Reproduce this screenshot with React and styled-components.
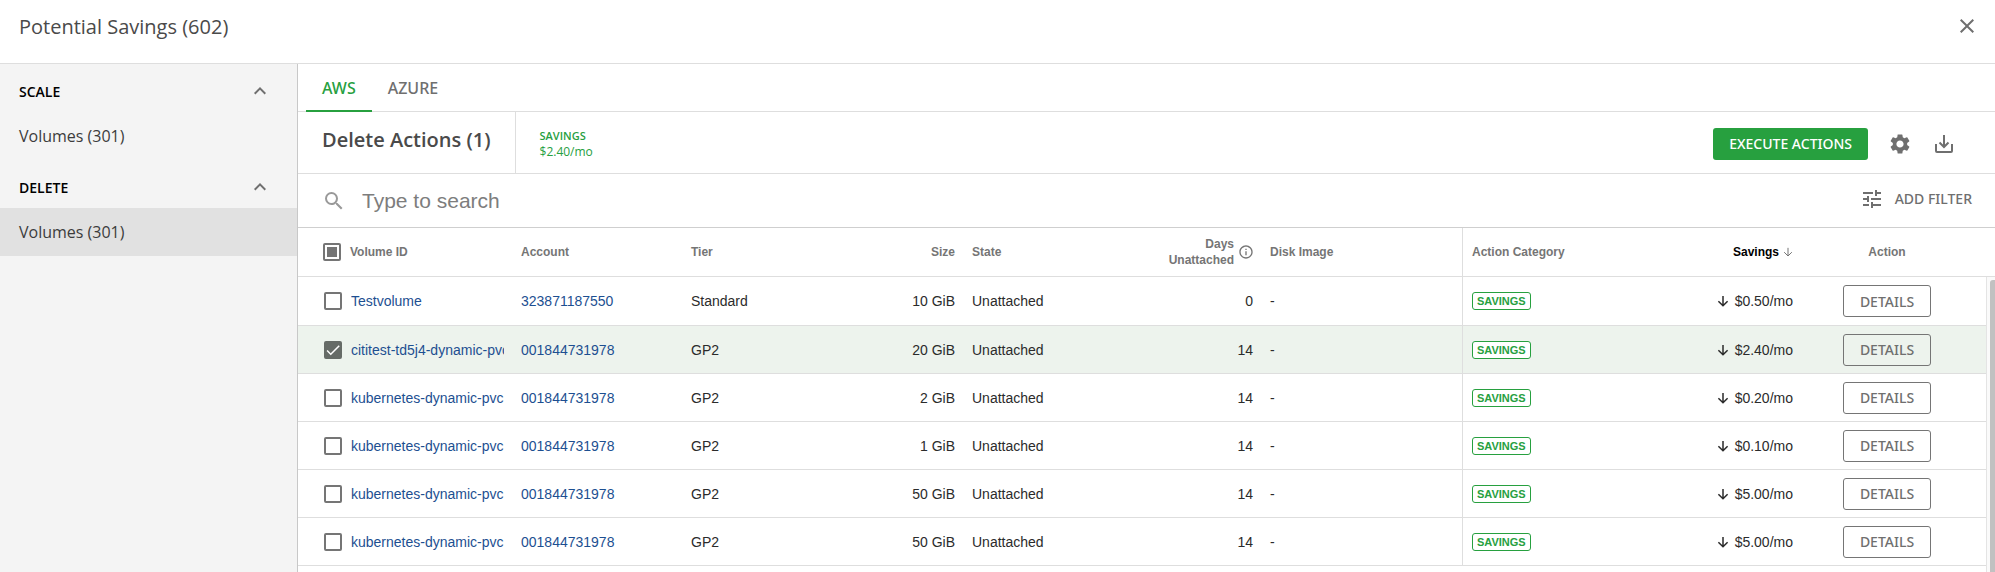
import React from "react";
import styled, { createGlobalStyle, css } from "styled-components";
import {
  MdCheck,
  MdClose,
  MdExpandLess,
  MdInfoOutline,
  MdSearch,
  MdSettings,
  MdTune,
} from "react-icons/md";

const green = "#27a03f";
const grey = "#6f6f6f";
const line = "#dedede";
const sans = `"Open Sans", "Noto Sans", sans-serif`;
const label = `"Noto Sans", "Open Sans", sans-serif`;
const grid = `"Liberation Sans", Arial, sans-serif`;

const GlobalStyle = createGlobalStyle`
  *, *::before, *::after { box-sizing: border-box; }
  html, body, #root { height: 100%; }
  body { margin: 0; background: #fff; color: #333; font-family: ${sans}; overflow: hidden; }
  button, input { font: inherit; }
  button { cursor: pointer; }
`;

const Page = styled.div`
  display: flex;
  flex-direction: column;
  height: 100vh;
`;

const TitleBar = styled.header`
  display: flex;
  flex: none;
  justify-content: space-between;
  align-items: flex-start;
  height: 64px;
  padding: 12px 16px 0 19px;
  border-bottom: 1px solid ${line};
`;

const PageTitle = styled.h1`
  margin: 0;
  font-size: 20px;
  font-weight: 400;
  line-height: 30px;
  color: #4a4a4a;
`;

const IconButton = styled.button`
  display: inline-flex;
  padding: 2px 0;
  border: 0;
  background: none;
  color: ${grey};
  font-size: 24px;
`;

const Body = styled.div`
  display: flex;
  flex: 1;
  min-height: 0;
`;

const Sidebar = styled.nav`
  flex: none;
  width: 298px;
  border-right: 1px solid #c8c8c8;
  background: #f4f4f4;
`;

const SectionToggle = styled.button`
  display: flex;
  align-items: center;
  justify-content: space-between;
  width: 100%;
  height: 48px;
  padding: 6px 25px 0 19px;
  border: 0;
  background: none;
  color: #000;
  font-size: 14px;
  font-weight: 600;
  svg { font-size: 24px; color: ${grey}; }
`;

const SectionLink = styled.a`
  display: flex;
  align-items: center;
  height: 48px;
  padding: 0 19px;
  background: ${(p) => (p.$active ? "#e1e1e1" : "transparent")};
  color: #3c3c3c;
  font-size: 16px;
  text-decoration: none;
`;

const Main = styled.main`
  display: flex;
  flex: 1;
  flex-direction: column;
  min-width: 0;
`;

const Tabs = styled.div`
  display: flex;
  flex: none;
  height: 48px;
  padding-left: 8px;
  border-bottom: 1px solid ${line};
`;

const Tab = styled.button`
  height: 48px;
  padding: 2px 16px 0;
  border: 0;
  border-bottom: 2px solid ${(p) => (p.$active ? green : "transparent")};
  background: none;
  color: ${(p) => (p.$active ? green : grey)};
  font-family: ${label};
  font-size: 16px;
  font-weight: 500;
`;

const ActionBar = styled.section`
  display: flex;
  flex: none;
  height: 62px;
  border-bottom: 1px solid ${line};
`;

const ActionTitle = styled.h2`
  margin: 0;
  padding: 12px 24px 0;
  border-right: 1px solid ${line};
  color: #4a4a4a;
  font-size: 20px;
  font-weight: 600;
  line-height: 32px;
`;

const Metric = styled.div`
  flex: 1;
  padding: 16px 24px;
  color: ${green};
  font-size: 12px;
  line-height: 16px;
`;

const MetricLabel = styled.div`
  font-size: 11px;
  font-weight: 600;
`;

const ActionTools = styled.div`
  display: flex;
  align-items: center;
  gap: 20px;
  padding: 2px 39px 0 0;
`;

const PrimaryButton = styled.button`
  height: 32px;
  padding: 0 16px;
  border: 0;
  border-radius: 3px;
  background: ${green};
  color: #fff;
  font-family: ${label};
  font-size: 14px;
  font-weight: 500;
`;

const SearchBar = styled.section`
  display: flex;
  flex: none;
  align-items: center;
  height: 54px;
  padding: 0 23px 0 24px;
  border-bottom: 1px solid #cfcfcf;
  color: #999;
  > svg { flex: none; font-size: 24px; }
`;

const SearchInput = styled.input`
  flex: 1;
  min-width: 0;
  height: 40px;
  margin-left: 16px;
  padding: 0;
  border: 0;
  outline: 0;
  font-family: ${grid};
  font-size: 21px;
  &::placeholder { color: #7d7d7d; opacity: 1; }
`;

const FilterButton = styled.button`
  display: flex;
  align-items: center;
  gap: 11px;
  padding: 0 0 4px;
  border: 0;
  background: none;
  color: ${grey};
  font-family: ${label};
  font-size: 14px;
  font-weight: 500;
  svg { font-size: 24px; }
`;

const TableFrame = styled.div`
  position: relative;
  flex: 1;
  min-height: 0;
  overflow: hidden;
`;

const Table = styled.table`
  width: 100%;
  table-layout: fixed;
  border-collapse: separate;
  border-spacing: 0;
  font-family: ${grid};
`;

const Col = styled.col`
  width: ${(p) => (p.$w ? `${p.$w}px` : "auto")};
`;

const cell = css`
  padding: 0 8px 0 9px;
  border-bottom: 1px solid ${line};
  border-right: ${(p) => (p.$divider ? `1px solid ${line}` : "0")};
  text-align: ${(p) => p.$align || "left"};
  white-space: nowrap;
  overflow: hidden;
`;

const HeadCell = styled.th`
  ${cell}
  height: 49px;
  color: ${(p) => (p.$sorted ? "#000" : "#757575")};
  font-size: 12px;
  line-height: 16px;
`;

const Row = styled.tr`
  height: 48px;
  background: ${(p) => (p.$selected ? "#edf3ed" : "#fff")};
  &:first-child { height: 49px; }
`;

const Cell = styled.td`
  ${cell}
  color: #2b2b2b;
  font-size: 14px;
`;

const VolumeCell = styled.div`
  display: flex;
  align-items: center;
  gap: 9px;
  padding-left: ${(p) => (p.$head ? "16px" : "17px")};
`;

const Clip = styled.div`
  flex: 1;
  min-width: 0;
  overflow: hidden;
`;

const CellLink = styled.a`
  color: #1d4f91;
  text-decoration: none;
`;

const CheckFrame = styled.span`
  position: relative;
  display: inline-flex;
  flex: none;
  svg {
    position: absolute;
    inset: 0;
    width: 18px;
    height: 18px;
    color: #fff;
    stroke: currentColor;
    pointer-events: none;
  }
`;

const CheckInput = styled.input`
  display: grid;
  place-items: center;
  width: 18px;
  height: 18px;
  margin: 0;
  appearance: none;
  border: 2px solid #757575;
  border-radius: 2px;
  background: #fff;
  &:checked { border-color: #666b67; background: #666b67; }
  &:indeterminate::before {
    content: "";
    width: 10px;
    height: 10px;
    background: #757575;
  }
`;

const HeadGroup = styled.div`
  display: flex;
  align-items: center;
  justify-content: flex-end;
  gap: 4px;
  svg { flex: none; }
`;

const InfoIcon = styled(MdInfoOutline)`
  font-size: 16px;
  margin-right: -1px;
`;

const Badge = styled.span`
  display: inline-block;
  padding: 0 4px;
  border: 1px solid ${green};
  border-radius: 3px;
  background: #fff;
  color: ${green};
  font-size: 11px;
  font-weight: 700;
  line-height: 16px;
`;

const Amount = styled.div`
  display: flex;
  align-items: center;
  justify-content: flex-end;
  gap: 6px;
`;

const DetailsButton = styled.button`
  width: 88px;
  height: 32px;
  padding: 0;
  border: 1px solid #757575;
  border-radius: 3px;
  background: transparent;
  color: ${grey};
  font-family: ${label};
  font-size: 14px;
  font-weight: 500;
`;

const ScrollTrack = styled.div`
  position: absolute;
  top: 49px;
  right: 0;
  bottom: 0;
  width: 9px;
  padding-top: 3px;
  padding-left: 3px;
  border-left: 1px solid #e4e4e4;
  background: #fafafa;
`;

const ScrollThumb = styled.div`
  height: 100%;
  border-radius: 3px 0 0 0;
  background: #c1c1c1;
`;

function DownArrow({ size, stroke, color }) {
  return (
    <svg width={size} height={size} viewBox="0 0 12 12" fill="none" stroke={color} strokeWidth={stroke}>
      <path d="M6 1v9.6M1.4 6.2L6 10.8l4.6-4.6" />
    </svg>
  );
}

function DownloadIcon() {
  return (
    <svg width="24" height="24" viewBox="0 0 24 24" fill="none" stroke="currentColor" strokeWidth="2">
      <path d="M12 3v12M7.5 10.5L12 15l4.5-4.5M4 12v7a1 1 0 0 0 1 1h14a1 1 0 0 0 1-1v-7" />
    </svg>
  );
}

function Check({ label: name, checked, indeterminate }) {
  const ref = React.useRef(null);
  const [on, setOn] = React.useState(Boolean(checked));
  React.useEffect(() => {
    ref.current.indeterminate = Boolean(indeterminate);
  }, [indeterminate]);
  return (
    <CheckFrame>
      <CheckInput
        ref={ref}
        type="checkbox"
        aria-label={name}
        checked={on}
        onChange={(e) => setOn(e.target.checked)}
      />
      {on && <MdCheck />}
    </CheckFrame>
  );
}

const sections = [
  { name: "SCALE", item: "Volumes (301)" },
  { name: "DELETE", item: "Volumes (301)", active: true },
];

const rows = [
  { id: "Testvolume", account: "323871187550", tier: "Standard", size: "10 GiB", days: 0, savings: "$0.50/mo" },
  { id: "cititest-td5j4-dynamic-pvc", account: "001844731978", tier: "GP2", size: "20 GiB", days: 14, savings: "$2.40/mo", selected: true },
  { id: "kubernetes-dynamic-pvc", account: "001844731978", tier: "GP2", size: "2 GiB", days: 14, savings: "$0.20/mo" },
  { id: "kubernetes-dynamic-pvc", account: "001844731978", tier: "GP2", size: "1 GiB", days: 14, savings: "$0.10/mo" },
  { id: "kubernetes-dynamic-pvc", account: "001844731978", tier: "GP2", size: "50 GiB", days: 14, savings: "$5.00/mo" },
  { id: "kubernetes-dynamic-pvc", account: "001844731978", tier: "GP2", size: "50 GiB", days: 14, savings: "$5.00/mo" },
];

const columnWidths = [214, 170, 140, 141, 149, 149, null, 169, 169, 171, 23];

export default function App() {
  return (
    <Page>
      <GlobalStyle />
      <TitleBar>
        <PageTitle>Potential Savings (602)</PageTitle>
        <IconButton aria-label="Close"><MdClose /></IconButton>
      </TitleBar>
      <Body>
        <Sidebar>
          {sections.map((s) => (
            <div key={s.name}>
              <SectionToggle aria-expanded="true">
                {s.name}
                <MdExpandLess />
              </SectionToggle>
              <SectionLink href="#" $active={s.active}>{s.item}</SectionLink>
            </div>
          ))}
        </Sidebar>
        <Main>
          <Tabs role="tablist">
            <Tab role="tab" aria-selected="true" $active>AWS</Tab>
            <Tab role="tab" aria-selected="false">AZURE</Tab>
          </Tabs>
          <ActionBar>
            <ActionTitle>Delete Actions (1)</ActionTitle>
            <Metric>
              <MetricLabel>SAVINGS</MetricLabel>
              $2.40/mo
            </Metric>
            <ActionTools>
              <PrimaryButton>EXECUTE ACTIONS</PrimaryButton>
              <IconButton aria-label="Settings"><MdSettings /></IconButton>
              <IconButton aria-label="Download"><DownloadIcon /></IconButton>
            </ActionTools>
          </ActionBar>
          <SearchBar>
            <MdSearch />
            <SearchInput type="text" aria-label="Search" placeholder="Type to search" />
            <FilterButton>
              <MdTune />
              ADD FILTER
            </FilterButton>
          </SearchBar>
          <TableFrame>
            <Table>
              <colgroup>
                {columnWidths.map((w, i) => <Col key={i} $w={w} />)}
              </colgroup>
              <thead>
                <tr>
                  <HeadCell>
                    <VolumeCell $head>
                      <Check label="Select all" indeterminate />
                      Volume ID
                    </VolumeCell>
                  </HeadCell>
                  <HeadCell>Account</HeadCell>
                  <HeadCell>Tier</HeadCell>
                  <HeadCell $align="right">Size</HeadCell>
                  <HeadCell>State</HeadCell>
                  <HeadCell $align="right">
                    <HeadGroup>
                      <span>Days<br />Unattached</span>
                      <InfoIcon />
                    </HeadGroup>
                  </HeadCell>
                  <HeadCell $divider>Disk Image</HeadCell>
                  <HeadCell>Action Category</HeadCell>
                  <HeadCell $align="right" $sorted>
                    <HeadGroup>
                      Savings
                      <DownArrow size={10} stroke={1.2} color="#757575" />
                    </HeadGroup>
                  </HeadCell>
                  <HeadCell $align="center">Action</HeadCell>
                  <HeadCell as="td" />
                </tr>
              </thead>
              <tbody>
                {rows.map((r, i) => (
                  <Row key={i} $selected={r.selected}>
                    <Cell>
                      <VolumeCell>
                        <Check label={`Select ${r.id}`} checked={r.selected} />
                        <Clip><CellLink href="#">{r.id}</CellLink></Clip>
                      </VolumeCell>
                    </Cell>
                    <Cell><CellLink href="#">{r.account}</CellLink></Cell>
                    <Cell>{r.tier}</Cell>
                    <Cell $align="right">{r.size}</Cell>
                    <Cell>Unattached</Cell>
                    <Cell $align="right">{r.days}</Cell>
                    <Cell $divider>-</Cell>
                    <Cell><Badge>SAVINGS</Badge></Cell>
                    <Cell $align="right">
                      <Amount>
                        <DownArrow size={12} stroke={1.5} color="#2b2b2b" />
                        {r.savings}
                      </Amount>
                    </Cell>
                    <Cell $align="center"><DetailsButton>DETAILS</DetailsButton></Cell>
                    <Cell />
                  </Row>
                ))}
              </tbody>
            </Table>
            <ScrollTrack><ScrollThumb /></ScrollTrack>
          </TableFrame>
        </Main>
      </Body>
    </Page>
  );
}
